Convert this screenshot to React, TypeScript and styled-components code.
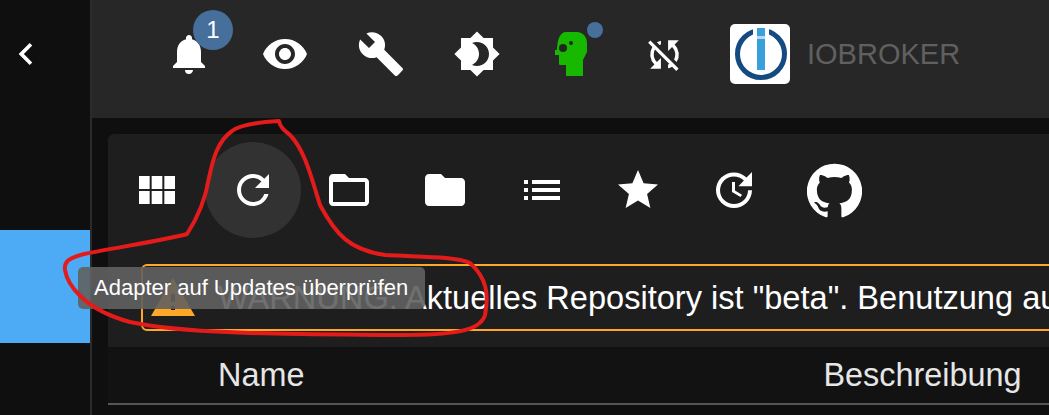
import React from 'react';
import styled, { createGlobalStyle } from 'styled-components';
import {
  MdNotifications,
  MdVisibility,
  MdBuild,
  MdBrightness4,
  MdSyncDisabled,
  MdRefresh,
  MdFolderOpen,
  MdFolder,
  MdList,
  MdStar,
  MdUpdate,
  MdChevronLeft,
  MdWarning,
} from 'react-icons/md';

const GlobalStyle = createGlobalStyle`
  html, body {
    margin: 0;
    padding: 0;
    background: #121212;
    overflow: hidden;
  }
  body {
    font-family: "Liberation Sans", Arial, sans-serif;
    color: #fff;
  }
`;

const Page = styled.div`
  position: relative;
  display: flex;
  width: 1049px;
  height: 415px;
  overflow: hidden;
`;

const Sidebar = styled.aside`
  flex: 0 0 90px;
  display: flex;
  flex-direction: column;
  background: #0f0f0f;
  border-right: 2px solid #2b2b2b;
`;

const Collapse = styled.div`
  height: 230px;
  padding-top: 32px;
  padding-left: 4px;
  box-sizing: border-box;
  color: #fff;
  font-size: 44px;
  line-height: 0;
`;

const ActiveItem = styled.div`
  height: 113px;
  background: #4dabf5;
`;

const Main = styled.main`
  flex: 1;
  min-width: 0;
  display: flex;
  flex-direction: column;
  background: #0f0f0f;
`;

const TopBar = styled.header`
  height: 118px;
  box-sizing: border-box;
  flex: none;
  display: flex;
  align-items: center;
  padding: 0 0 10px 49px;
  background: #272727;
`;

const TopButton = styled.div`
  position: relative;
  flex: none;
  width: 96px;
  height: 96px;
  display: flex;
  align-items: center;
  justify-content: center;
  color: #fff;
  font-size: 48px;
`;

const Badge = styled.span`
  position: absolute;
  left: 52px;
  top: 4px;
  width: 40px;
  height: 40px;
  border-radius: 50%;
  display: flex;
  align-items: center;
  justify-content: center;
  background: #466f9b;
  font-size: 24px;
`;

const Dot = styled.span`
  position: absolute;
  left: 62px;
  top: 16px;
  width: 16px;
  height: 16px;
  border-radius: 50%;
  background: #466f9b;
`;

const HeadSvg = styled.svg`
  margin-right: 4px;
`;

const SyncIcon = styled(MdSyncDisabled)`
  margin-right: 10px;
  font-size: 43px;
`;

const Logo = styled.div`
  flex: none;
  width: 60px;
  height: 60px;
  margin-left: 13px;
  border-radius: 5px;
  background: #fff;
  display: flex;
`;

const Brand = styled.span`
  margin-left: 17px;
  font-size: 29px;
  color: #606060;
`;

const Content = styled.div`
  flex: 1;
  min-height: 0;
  padding: 16px 0 0 16px;
  display: flex;
  flex-direction: column;
`;

const Panel = styled.section`
  height: 213px;
  flex: none;
  background: #1e1e1e;
  border-radius: 6px 0 0 0;
`;

const Toolbar = styled.div`
  display: flex;
  gap: 0.3px;
  padding: 8px 0 0 0.5px;
`;

const ToolButton = styled.div<{ $active?: boolean }>`
  flex: none;
  width: 96px;
  height: 96px;
  border-radius: 50%;
  display: flex;
  align-items: center;
  justify-content: center;
  color: #fff;
  font-size: 48px;
  background: ${(p) => (p.$active ? '#323232' : 'transparent')};
`;

const RepoLink = styled(ToolButton)`
  margin-left: 4px;
`;

const Alert = styled.div`
  margin: 26px 0 0 33px;
  height: 67px;
  box-sizing: border-box;
  width: 1100px;
  display: flex;
  align-items: center;
  gap: 21px;
  padding-left: 6px;
  border: 2px solid #ffa726;
  border-radius: 6px;
  white-space: nowrap;
  font-size: 32.6px;
  color: #fff;
`;

const AlertIcon = styled.span`
  flex: none;
  display: flex;
  color: #ffa726;
  font-size: 48px;
`;

const TableHead = styled.div`
  flex: 0 0 58px;
  box-sizing: border-box;
  background: #121212;
  border-bottom: 2px solid #555;
  display: flex;
  align-items: center;
  font-size: 32.4px;
  color: #e6e6e6;
  padding-left: 110px;
`;

const DescriptionColumn = styled.span`
  margin-left: 519px;
`;

const Tooltip = styled.div`
  position: absolute;
  left: 78px;
  top: 267px;
  width: 347px;
  height: 42px;
  box-sizing: border-box;
  padding-left: 16px;
  display: flex;
  align-items: center;
  border-radius: 5px;
  background: rgba(97, 97, 97, 0.9);
  font-size: 22px;
  color: #fff;
  white-space: nowrap;
`;

const Annotation = styled.svg`
  position: absolute;
  left: 0;
  top: 0;
  pointer-events: none;
`;

const Icon24: React.FC<{ d: string; size?: number }> = ({ d, size = 48 }) => (
  <svg width={size} height={size} viewBox="0 0 24 24" fill="currentColor">
    <path d={d} />
  </svg>
);

const GRID =
  'M14.67 5v6.5H9.33V5h5.34zm1 6.5H21V5h-5.33v6.5zm-1 7.5v-6.5H9.33V19h5.34zm1-6.5V19H21v-6.5h-5.33zm-7.34 0H3V19h5.33v-6.5zm0-1V5H3v6.5h5.33z';
const GITHUB =
  'M12 .3a12 12 0 0 0-3.8 23.4c.6.1.8-.3.8-.6v-2c-3.3.7-4-1.6-4-1.6-.6-1.4-1.4-1.8-1.4-1.8-1-.7.1-.7.1-.7 1.2 0 1.9 1.2 1.9 1.2 1 1.8 2.8 1.3 3.5 1 0-.8.4-1.3.7-1.6-2.7-.3-5.5-1.3-5.5-6 0-1.2.5-2.3 1.3-3.1-.2-.4-.6-1.6 0-3.2 0 0 1-.3 3.4 1.2a11.5 11.5 0 0 1 6 0c2.3-1.5 3.3-1.2 3.3-1.2.6 1.6.2 2.8 0 3.2.9.8 1.3 1.9 1.3 3.2 0 4.6-2.8 5.6-5.5 5.9.5.4.9 1 .9 2.2v3.3c0 .3.1.7.8.6A12 12 0 0 0 12 .3';

const HeadIcon = () => (
  <HeadSvg width="32" height="44" viewBox="0 0 32 44">
    <path
      fill="#17b800"
      d="M11 0H22C28 0 32 5 32 11V20L28 28V44H11V33H5C4 33 4 32 4 31V23H0V18H2C2 8 5 0 11 0Z"
    />
    <circle cx="8" cy="16" r="4" fill="#22261f" />
    <circle cx="16" cy="11" r="2" fill="#22261f" />
  </HeadSvg>
);

const IoBrokerLogo = () => (
  <svg width="60" height="60" viewBox="0 0 60 60">
    <circle cx="31" cy="30" r="23.5" fill="none" stroke="#154a80" strokeWidth="5" />
    <rect x="23" y="3" width="16" height="9" fill="#fff" />
    <rect x="27" y="4" width="8" height="8" fill="#3aa0dc" />
    <rect x="27" y="12" width="8" height="3" fill="#b5daf0" />
    <rect x="27" y="15" width="8" height="31" fill="#3aa0dc" />
  </svg>
);

const App = () => {
  return (
    <Page>
      <GlobalStyle />
      <Sidebar>
        <Collapse>
          <MdChevronLeft />
        </Collapse>
        <ActiveItem />
      </Sidebar>
      <Main>
        <TopBar>
          <TopButton>
            <MdNotifications />
            <Badge>1</Badge>
          </TopButton>
          <TopButton>
            <MdVisibility />
          </TopButton>
          <TopButton>
            <MdBuild />
          </TopButton>
          <TopButton>
            <MdBrightness4 />
          </TopButton>
          <TopButton>
            <HeadIcon />
            <Dot />
          </TopButton>
          <TopButton>
            <SyncIcon />
          </TopButton>
          <Logo>
            <IoBrokerLogo />
          </Logo>
          <Brand>IOBROKER</Brand>
        </TopBar>
        <Content>
          <Panel>
            <Toolbar>
              <ToolButton>
                <Icon24 d={GRID} />
              </ToolButton>
              <ToolButton $active>
                <MdRefresh />
              </ToolButton>
              <ToolButton>
                <MdFolderOpen />
              </ToolButton>
              <ToolButton>
                <MdFolder />
              </ToolButton>
              <ToolButton>
                <MdList />
              </ToolButton>
              <ToolButton>
                <MdStar />
              </ToolButton>
              <ToolButton>
                <MdUpdate />
              </ToolButton>
              <RepoLink>
                <Icon24 d={GITHUB} size={55} />
              </RepoLink>
            </Toolbar>
            <Alert>
              <AlertIcon>
                <MdWarning />
              </AlertIcon>
              <span>WARNUNG: Aktuelles Repository ist "beta". Benutzung auf eigene Gefahr!</span>
            </Alert>
          </Panel>
          <TableHead>
            <span>Name</span>
            <DescriptionColumn>Beschreibung</DescriptionColumn>
          </TableHead>
        </Content>
      </Main>
      <Tooltip>Adapter auf Updates überprüfen</Tooltip>
      <Annotation width="1049" height="415" viewBox="0 0 1049 415">
        <path
          fill="none"
          stroke="#e41b1b"
          strokeWidth="4"
          strokeLinecap="round"
          strokeLinejoin="round"
          d="M279 121C262 122 240 125 232 131C218 141 213 158 209 178C206 196 200 214 187 234C170 239 120 247 84 254C68 258 64 262 65 270C67 283 82 309 130 322C190 335 300 334 400 335C450 335 480 332 485 315C489 295 487 278 470 263C455 256 420 257 385 255C350 250 336 235 320 205C312 180 305 150 290 135C284 130 280 127 279 121Z"
        />
      </Annotation>
    </Page>
  );
};

export default App;
